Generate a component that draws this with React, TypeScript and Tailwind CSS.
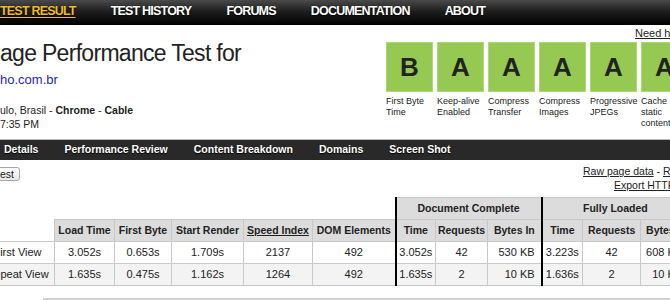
import React from "react";

const topNav = [
  { label: "TEST RESULT", active: true },
  { label: "TEST HISTORY" },
  { label: "FORUMS" },
  { label: "DOCUMENTATION" },
  { label: "ABOUT" },
];

const subNav = ["Details", "Performance Review", "Content Breakdown", "Domains", "Screen Shot"];

const grades = [
  { grade: "B", label: ["First Byte", "Time"] },
  { grade: "A", label: ["Keep-alive", "Enabled"] },
  { grade: "A", label: ["Compress", "Transfer"] },
  { grade: "A", label: ["Compress", "Images"] },
  { grade: "A", label: ["Progressive", "JPEGs"] },
  { grade: "A", label: ["Cache", "static", "content"] },
];

const rows = [
  {
    name: "First View",
    cells: ["3.052s", "0.653s", "1.709s", "2137", "492"],
    doc: ["3.052s", "42", "530 KB"],
    full: ["3.223s", "42", "608 KB"],
  },
  {
    name: "Repeat View",
    cells: ["1.635s", "0.475s", "1.162s", "1264", "492"],
    doc: ["1.635s", "2", "10 KB"],
    full: ["1.636s", "2", "10 KB"],
  },
];

const cell = "border border-[#c8c8c8] h-[22px] p-0";

export default function App() {
  return (
    <div className="w-[670px] h-[300px] overflow-hidden bg-white text-[#222] font-['Liberation_Sans',Arial,sans-serif]">
      {/* Top navigation */}
      <nav className="h-[25px] bg-[linear-gradient(#4a4a4a,#1e1e1e_45%,#000)] flex items-start pt-[4px] gap-[35px] whitespace-nowrap font-bold text-[12.5px] leading-[15px] tracking-[-0.8px] [text-shadow:0_1px_2px_#000]">
        {topNav.map((item) => (
          <span
            key={item.label}
            className={
              item.active
                ? "text-[#f0bc1c] underline underline-offset-[2px]"
                : "text-white"
            }
          >
            {item.label}
          </span>
        ))}
      </nav>

      {/* Header */}
      <div className="h-[114px] flex">
        <div className="w-[386px] shrink-0 whitespace-nowrap">
          <h1 className="mt-[14px] text-[23px] leading-[28px] tracking-[-0.7px] font-normal">
            age Performance Test for
          </h1>
          <div className="mt-[5px] text-[13px] leading-[16px] text-[#2626ad]">ho.com.br</div>
          <div className="mt-[15px] text-[10.5px] leading-[14px]">
            ulo, Brasil - <b>Chrome</b> - <b>Cable</b>
          </div>
          <div className="text-[10.5px] leading-[14px]">7:35 PM</div>
        </div>
        <div className="shrink-0 whitespace-nowrap">
          <div className="mt-[2px] ml-[249px] text-[11px] leading-[13px] underline">Need help?</div>
          <div className="mt-[2px] flex gap-[4px]">
            {grades.map((g, i) => (
              <div key={i} className="w-[47px] shrink-0">
                <div className="h-[50px] bg-[#96c952] border border-[#acd878] flex items-center justify-center text-[26px] font-bold text-[#222]">
                  {g.grade}
                </div>
                <div className="mt-[4px] text-[9px] leading-[11px]">
                  {g.label.map((l) => (
                    <div key={l}>{l}</div>
                  ))}
                </div>
              </div>
            ))}
          </div>
        </div>
      </div>

      {/* Sub navigation */}
      <div className="h-[21px] border-t border-[#b8b8b8] bg-[#292929] flex items-center gap-[26px] pl-[4px] whitespace-nowrap text-white font-bold text-[10.5px] [text-shadow:0_1px_1px_#000]">
        {subNav.map((s) => (
          <span key={s}>{s}</span>
        ))}
      </div>

      {/* Actions */}
      <div className="flex justify-between">
        <button className="-ml-[6px] mt-[7px] h-[14px] px-[5px] rounded-[3px] border border-[#a8a8a8] bg-[linear-gradient(#fff,#e6e6e6)] text-[10.5px] leading-[12px]">
          est
        </button>
        <div className="mt-[4px] w-[87px] whitespace-nowrap text-[10.5px] leading-[14px]">
          <div>
            <span className="underline">Raw page data</span> - <span className="underline">Raw object data</span>
          </div>
          <div className="pl-[31px] underline">Export HTTP Archive (.har)</div>
        </div>
      </div>

      {/* Results table */}
      <table className="mt-[5px] -ml-[20px] table-fixed border-collapse w-[708px] whitespace-nowrap">
        <colgroup>
          <col className="w-[74px]" />
          <col className="w-[60px]" />
          <col className="w-[57px]" />
          <col className="w-[72px]" />
          <col className="w-[69px]" />
          <col className="w-[83px]" />
          <col className="w-[40px]" />
          <col className="w-[52px]" />
          <col className="w-[54px]" />
          <col className="w-[41px]" />
          <col className="w-[58px]" />
          <col className="w-[48px]" />
        </colgroup>
        <thead className="text-[10.5px] font-bold">
          <tr>
            <th colSpan={6} className="border-0 h-[22px] p-0"></th>
            <th colSpan={3} className={`${cell} border-l-2 border-l-black bg-[#dcdcdc]`}>
              Document Complete
            </th>
            <th colSpan={3} className={`${cell} border-l-2 border-l-black bg-[#dcdcdc]`}>
              Fully Loaded
            </th>
          </tr>
          <tr>
            <th className="border-0 h-[22px] p-0"></th>
            <th className={`${cell} bg-[#dcdcdc]`}>Load Time</th>
            <th className={`${cell} bg-[#dcdcdc]`}>First Byte</th>
            <th className={`${cell} bg-[#dcdcdc]`}>Start Render</th>
            <th className={`${cell} bg-[#dcdcdc]`}>
              <span className="underline">Speed Index</span>
            </th>
            <th className={`${cell} bg-[#dcdcdc]`}>DOM Elements</th>
            <th className={`${cell} border-l-2 border-l-black bg-[#dcdcdc]`}>Time</th>
            <th className={`${cell} bg-[#dcdcdc]`}>Requests</th>
            <th className={`${cell} bg-[#dcdcdc]`}>Bytes In</th>
            <th className={`${cell} border-l-2 border-l-black bg-[#dcdcdc]`}>Time</th>
            <th className={`${cell} bg-[#dcdcdc]`}>Requests</th>
            <th className={`${cell} bg-[#dcdcdc] text-left pl-[5px]`}>Bytes In</th>
          </tr>
        </thead>
        <tbody className="text-[11px]">
          {rows.map((r, ri) => (
            <tr key={r.name} className={ri === 1 ? "bg-[#f3f3f3]" : "bg-white"}>
              <td className={`${cell} text-center`}>{r.name}</td>
              {r.cells.map((c, i) => (
                <td key={i} className={`${cell} text-center`}>
                  {c}
                </td>
              ))}
              <td className={`${cell} border-l-2 border-l-black text-center`}>{r.doc[0]}</td>
              <td className={`${cell} text-center`}>{r.doc[1]}</td>
              <td className={`${cell} text-right pr-[6px]`}>{r.doc[2]}</td>
              <td className={`${cell} border-l-2 border-l-black text-center`}>{r.full[0]}</td>
              <td className={`${cell} text-center`}>{r.full[1]}</td>
              <td className={`${cell} text-right pr-[6px]`}>{r.full[2]}</td>
            </tr>
          ))}
        </tbody>
      </table>

      {/* Next section (waterfall box top) */}
      <div className="mt-[12px] ml-[43px] h-[10px] border-t-[3px] border-[#d2d2d2] bg-[#f6f6f6]"></div>
    </div>
  );
}
